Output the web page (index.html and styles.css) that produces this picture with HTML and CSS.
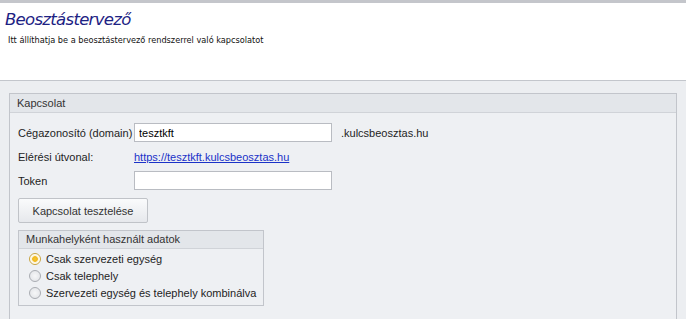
FILE: index.html
```html
<!DOCTYPE html>
<html lang="hu">
<head>
    <meta charset="UTF-8">
    <title>Beosztástervező</title>
    <link rel="stylesheet" href="styles.css">
</head>
<body>
    <header class="page-header">
        <h1>Beosztástervező</h1>
        <p>Itt állíthatja be a beosztástervező rendszerrel való kapcsolatot</p>
    </header>

    <div class="content">
        <div class="group">
            <div class="group-title">Kapcsolat</div>
            <div class="group-body">
                <div class="row">
                    <label class="label" for="domain">Cégazonosító (domain)</label>
                    <input type="text" id="domain" class="field" value="tesztkft">
                    <span class="suffix">.kulcsbeosztas.hu</span>
                </div>
                <div class="row row-link">
                    <span class="label">Elérési útvonal:</span>
                    <a href="#" class="link">https://tesztkft.kulcsbeosztas.hu</a>
                </div>
                <div class="row">
                    <label class="label" for="token">Token</label>
                    <input type="text" id="token" class="field">
                </div>
                <button class="btn" type="button">Kapcsolat tesztelése</button>

                <div class="group group-inner">
                    <div class="group-title">Munkahelyként használt adatok</div>
                    <div class="group-body radios">
                        <label class="radio"><span class="dot checked"></span>Csak szervezeti egység</label>
                        <label class="radio"><span class="dot"></span>Csak telephely</label>
                        <label class="radio"><span class="dot"></span>Szervezeti egység és telephely kombinálva</label>
                    </div>
                </div>
            </div>
        </div>
    </div>
</body>
</html>
```

FILE: styles.css
```css
body {
    margin: 0;
    font-family: "Liberation Sans", Arial, sans-serif;
    font-size: 11px;
    color: #1e1e1e;
    background: #eceef1;
    height: 319px;
    overflow: hidden;
}
.page-header {
    background: #fff;
    border-top: 3px solid #c4c6cb;
    border-bottom: 1px solid #c3c6cc;
    height: 81px;
    padding: 0 5px;
    box-sizing: border-box;
}
.page-header h1 {
    margin: 0;
    padding-top: 7px;
    font-family: "DejaVu Sans", Verdana, sans-serif;
    font-style: italic;
    font-weight: normal;
    font-size: 16.5px;
    line-height: 20px;
    color: #1d2283;
    letter-spacing: -0.7px;
}
.page-header p {
    margin: 5px 0 0 3px;
    font-family: "DejaVu Sans", Verdana, sans-serif;
    font-size: 8.2px;
    color: #111;
}
.content {
    padding: 12px 9px 0 9px;
}
.group {
    border: 1px solid #c2c5cb;
    background: #eef0f3;
}
.group-title {
    background: #e3e6ea;
    border-bottom: 1px solid #d0d3d8;
    height: 18px;
    line-height: 18px;
    padding-left: 7px;
    color: #333;
}
.group-body {
    padding: 10px 8px 8px 8px;
    height: 190px;
}
.row {
    display: flex;
    align-items: center;
    height: 19px;
    margin-bottom: 5px;
}
.row-link {
    margin-bottom: 5px;
}
.label {
    width: 116px;
    flex: none;
}
.field {
    width: 198px;
    height: 19px;
    box-sizing: border-box;
    border: 1px solid #b9bcc2;
    background: #fff;
    font: inherit;
    padding: 0 4px;
    margin: 0;
}
.suffix {
    margin-left: 9px;
}
.link {
    color: #1a32c8;
    text-decoration: underline;
}
.btn {
    display: block;
    width: 130px;
    height: 25px;
    margin-top: 8px;
    border: 1px solid #c0c3c8;
    border-radius: 2px;
    background: linear-gradient(#fafbfc, #e6e8ec);
    font: inherit;
    color: #333;
}
.group-inner {
    width: 244px;
    margin-top: 7px;
}
.group-inner .group-title {
    height: 17px;
    line-height: 17px;
}
.group-inner .group-body {
    height: auto;
    padding: 1px 0 4px 10px;
}
.radios {
    display: flex;
    flex-direction: column;
}
.radio {
    display: flex;
    align-items: center;
    height: 17px;
}
.dot {
    width: 12px;
    height: 12px;
    border-radius: 50%;
    border: 1px solid #a9acb2;
    background: radial-gradient(#f6f7f8, #dfe1e5);
    margin-right: 5px;
    box-sizing: border-box;
}
.dot.checked {
    border-color: #c8a440;
    background: radial-gradient(#f7c531 0, #f0b820 35%, #fdf3d0 45%, #fff 70%);
}
```
